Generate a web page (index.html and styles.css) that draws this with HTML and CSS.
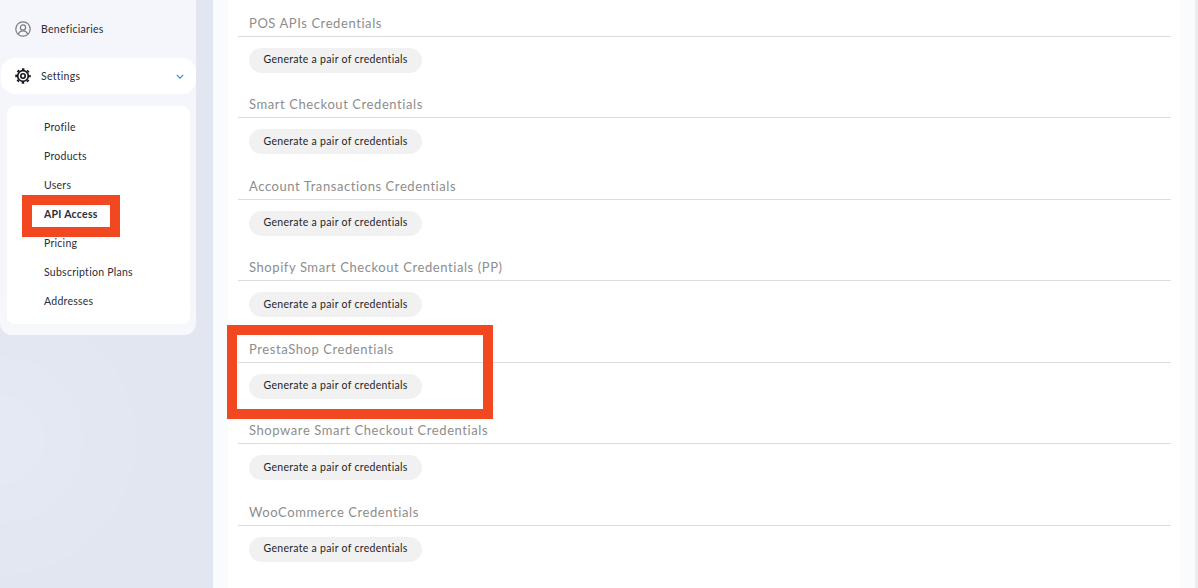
FILE: index.html
```html
<!DOCTYPE html>
<html lang="en">

<head>
    <meta charset="UTF-8">
    <title>API Access</title>
    <link rel="stylesheet" href="styles.css">
</head>

<body>
    <div class="layout">

        <aside class="sidebar">
            <div class="side-panel">
                <a class="side-link">
                    <svg class="side-icon" viewBox="0 0 16 16" fill="none" stroke="#777b84" stroke-width="1.2">
                        <circle cx="8" cy="8" r="7.2"/>
                        <circle cx="8" cy="6.4" r="2.6"/>
                        <path d="M3.3 13.2c.7-2.2 2.5-3.4 4.7-3.4s4 1.2 4.7 3.4"/>
                    </svg>
                    Beneficiaries
                </a>
                <a class="side-link side-link-open">
                    <svg class="side-icon" viewBox="0 0 16 16" fill="none" stroke="#14151a">
                        <circle cx="8" cy="8" r="5.3" stroke-width="1.7"/>
                        <circle cx="8" cy="8" r="6.9" stroke-width="1.7" stroke-dasharray="2.6 2.82" stroke-dashoffset="1.3"/>
                        <circle cx="8" cy="8" r="2.2" stroke-width="1.6"/>
                    </svg>
                    Settings
                    <svg class="chevron" viewBox="0 0 10 6" fill="none" stroke="#2f86c9" stroke-width="1.4">
                        <path d="M1 1l4 4 4-4"/>
                    </svg>
                </a>
                <nav class="sub-menu">
                    <a class="sub-link">Profile</a>
                    <a class="sub-link">Products</a>
                    <a class="sub-link">Users</a>
                    <a class="sub-link sub-link-active"><span class="mark-small">API Access</span></a>
                    <a class="sub-link">Pricing</a>
                    <a class="sub-link">Subscription Plans</a>
                    <a class="sub-link">Addresses</a>
                </nav>
            </div>
        </aside>

        <main class="content">
            <section class="cred">
                <h2 class="cred-title">POS APIs Credentials</h2>
                <button class="cred-btn">Generate a pair of credentials</button>
            </section>
            <section class="cred">
                <h2 class="cred-title">Smart Checkout Credentials</h2>
                <button class="cred-btn">Generate a pair of credentials</button>
            </section>
            <section class="cred">
                <h2 class="cred-title">Account Transactions Credentials</h2>
                <button class="cred-btn">Generate a pair of credentials</button>
            </section>
            <section class="cred">
                <h2 class="cred-title">Shopify Smart Checkout Credentials (PP)</h2>
                <button class="cred-btn">Generate a pair of credentials</button>
            </section>
            <section class="cred">
                <h2 class="cred-title">PrestaShop Credentials</h2>
                <button class="cred-btn">Generate a pair of credentials</button>
                <div class="mark-box"></div>
            </section>
            <section class="cred">
                <h2 class="cred-title">Shopware Smart Checkout Credentials</h2>
                <button class="cred-btn">Generate a pair of credentials</button>
            </section>
            <section class="cred">
                <h2 class="cred-title">WooCommerce Credentials</h2>
                <button class="cred-btn">Generate a pair of credentials</button>
            </section>
        </main>

        <div class="scroll-edge"></div>

    </div>
</body>

</html>
```

FILE: styles.css
```css
html,
body {
    margin: 0;
    height: 100%;
    overflow: hidden;
}

body {
    font-family: "Lato", "Open Sans", sans-serif;
    background: #fafbfd;
}

.layout {
    display: flex;
    height: 588px;
}

/* left column */
.sidebar {
    width: 213px;
    flex: none;
    background: radial-gradient(circle at 0 440px, #e5e9f3 0, #e5e9f3 45px, #e4e8f2 45px, #e4e8f2 83px, #e3e7f2 83px, #e3e7f2 135px, #e2e6f1 135px);
}

.side-panel {
    width: 196px;
    height: 335px;
    box-sizing: border-box;
    padding-top: 11px;
    background: linear-gradient(#f4f6fb 85%, #f7f8fc);
    border-radius: 0 0 12px 12px;
}

.side-link {
    display: flex;
    align-items: center;
    height: 36px;
    margin-left: 1px;
    padding-left: 14px;
    font-size: 10.5px;
    letter-spacing: 0.28px;
    color: #2b2d38;
}

.side-link-open {
    margin-top: 11px;
    background: #ffffff;
    border-radius: 14px;
}

.side-icon {
    width: 16px;
    height: 16px;
    margin-right: 10px;
}

.chevron {
    width: 8px;
    height: 5px;
    margin-left: auto;
    margin-right: 12px;
}

.sub-menu {
    display: flex;
    flex-direction: column;
    height: 218px;
    box-sizing: border-box;
    margin: 12px 6px 0 7px;
    padding-top: 6px;
    background: #ffffff;
    border-radius: 8px;
}

.sub-link {
    display: flex;
    align-items: center;
    height: 29px;
    padding-left: 37px;
    font-size: 10.5px;
    letter-spacing: 0.26px;
    color: #2b2d38;
}

.sub-link-active {
    font-weight: 700;
}

.mark-small {
    position: relative;
    z-index: 1;
}

.mark-small::before {
    content: "";
    position: absolute;
    left: -22px;
    top: -13px;
    width: 98px;
    height: 42px;
    box-sizing: border-box;
    border: 10px solid #f24822;
    z-index: -1;
}

/* right column */
.content {
    flex: 1;
    margin: 0 15px;
    padding: 0 9px 0 10px;
    background: #ffffff;
}

.scroll-edge {
    width: 3px;
    flex: none;
    background: #ececec;
}

.cred {
    position: relative;
    height: 81.5px;
}

.cred:first-child {
    margin-top: 13.6px;
}

.cred-title {
    margin: 0 0 11px;
    height: 22.4px;
    padding-left: 11px;
    border-bottom: 1px solid #dcdcdc;
    font-size: 13px;
    line-height: 18px;
    font-weight: 400;
    letter-spacing: 0.58px;
    color: #8d8d8d;
}

.cred-btn {
    display: block;
    height: 25px;
    margin-left: 11px;
    padding: 0 14.5px 2px;
    border: none;
    border-radius: 12.5px;
    background: #f1f1f1;
    font-family: inherit;
    font-size: 10.5px;
    letter-spacing: 0.3px;
    color: #1e1f26;
}

.mark-box {
    position: absolute;
    left: -11px;
    top: -15px;
    width: 266px;
    height: 94px;
    box-sizing: border-box;
    border: 10px solid #f24822;
}
```
